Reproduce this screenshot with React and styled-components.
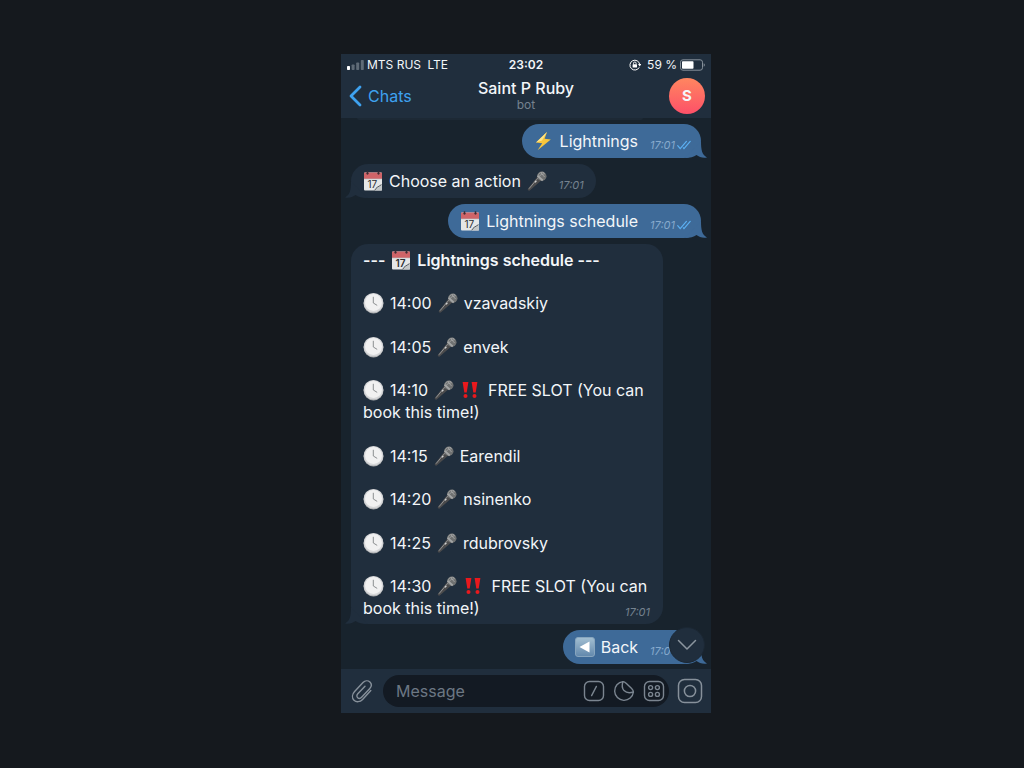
import React from 'react';
import styled, { createGlobalStyle } from 'styled-components';

const GlobalStyle = createGlobalStyle`
  * {
    box-sizing: border-box;
  }

  body {
    margin: 0;
    background-color: #15191e;
    font-family: Inter, 'Liberation Sans', sans-serif;
    color: #f3f6f9;
  }
`;

const Page = styled.main`
  display: flex;
  justify-content: center;
  align-items: center;
  min-height: 100vh;
  padding: 0 0 2px 28px;
`;

const Phone = styled.section`
  width: 100%;
  max-width: 370px;
  background-color: #18232d;
`;

const Header = styled.header`
  height: 64px;
  padding: 0 6px;
  background-color: #202e3d;
`;

const StatusBar = styled.div`
  display: grid;
  grid-template-columns: 1fr auto 1fr;
  align-items: center;
  height: 22px;
  font-size: 12px;
  line-height: 22px;
`;

const StatusGroup = styled.div`
  display: flex;
  align-items: center;
  justify-content: ${(props) => (props.$end ? 'flex-end' : 'flex-start')};
  gap: 3px;
  white-space: pre;
`;

const Clock = styled.span`
  font-weight: 600;
`;

const NavBar = styled.div`
  display: grid;
  grid-template-columns: 1fr auto 1fr;
  align-items: center;
  height: 40px;
`;

const BackLink = styled.a`
  display: flex;
  align-items: center;
  gap: 6px;
  padding-left: 2px;
  font-size: 16px;
  color: #3ea2f0;
  text-decoration: none;
`;

const TitleBlock = styled.div`
  padding-bottom: 2px;
  text-align: center;
`;

const Title = styled.h1`
  margin: 0;
  font-size: 16px;
  font-weight: 500;
  line-height: 20px;
`;

const Subtitle = styled.p`
  margin: 0;
  font-size: 12px;
  line-height: 14px;
  color: #75828f;
`;

const Avatar = styled.div`
  display: flex;
  align-items: center;
  justify-content: center;
  justify-self: end;
  width: 36px;
  height: 36px;
  border-radius: 50%;
  background: linear-gradient(#ff8660, #fd5068);
  font-size: 15px;
  font-weight: 700;
`;

const Chat = styled.div`
  position: relative;
  display: flex;
  flex-direction: column;
  align-items: flex-start;
  gap: 6px;
  padding: 6px 10px 5px;

  &::before {
    content: '';
    position: absolute;
    top: 0;
    left: 16px;
    width: 286px;
    height: 2px;
    border-radius: 0 0 8px 8px;
    background-color: #1d2935;
  }
`;

const Bubble = styled.article`
  position: relative;
  display: flex;
  align-self: ${(props) => (props.$out ? 'flex-end' : 'flex-start')};
  gap: 12px;
  padding: ${(props) => (props.$out ? '6px 10px 6px 12px' : '6px 12px')};
  border-radius: 17px;
  background-color: ${(props) => (props.$out ? '#3e6a98' : '#202e3d')};
  font-size: 16px;
  line-height: 22px;
`;

const TailSvg = styled.svg`
  position: absolute;
  bottom: 0;
  ${(props) => (props.$out ? 'right: -6px;' : 'left: -6px; transform: scaleX(-1);')}
`;

const Line = styled.p`
  display: flex;
  align-items: center;
  gap: 6px;
  margin: 0;
  white-space: nowrap;
`;

const Time = styled.time`
  display: flex;
  align-items: center;
  align-self: flex-end;
  gap: 2px;
  height: 14px;
  font-size: 11px;
  font-style: italic;
  line-height: 14px;
  color: ${(props) => (props.$out ? '#86a9cc' : '#75828f')};
`;

const ScheduleBubble = styled(Bubble)`
  width: 312px;
  max-width: 100%;
  padding: 5px 12px 4px;
`;

const Schedule = styled.div`
  display: flex;
  flex-direction: column;
  justify-content: space-between;
  flex: 1;
  min-height: 371px;
`;

const ScheduleTitle = styled.h2`
  display: flex;
  align-items: center;
  gap: 6px;
  margin: 0;
  font-size: 16px;
  font-weight: 600;
  line-height: 22px;
`;

const CornerTime = styled(Time)`
  position: absolute;
  right: 13px;
  bottom: 5px;
`;

const ScrollButton = styled.button`
  position: absolute;
  right: 6px;
  bottom: 6px;
  display: flex;
  align-items: center;
  justify-content: center;
  width: 36px;
  height: 36px;
  padding: 0;
  border: 1px solid #1b2733;
  border-radius: 50%;
  background-color: #202e3d;
`;

const Footer = styled.form`
  display: flex;
  align-items: center;
  gap: 8px;
  height: 44px;
  padding: 0 8px 0 10px;
  background-color: #202e3d;
`;

const IconButton = styled.button`
  display: flex;
  flex: none;
  padding: 0;
  border: none;
  background: none;
  cursor: pointer;
`;

const Field = styled.div`
  display: flex;
  align-items: center;
  flex: 1;
  gap: 8px;
  min-width: 0;
  height: 32px;
  padding: 0 4px 0 13px;
  border-radius: 16px;
  background-color: #131a23;
`;

const MessageInput = styled.input`
  flex: 1;
  min-width: 0;
  padding: 0;
  border: none;
  outline: none;
  background: none;
  font-family: inherit;
  font-size: 16px;
  color: #f3f6f9;

  &::placeholder {
    color: #6c7783;
    opacity: 1;
  }
`;

const Emoji = styled.svg`
  flex: none;
  display: block;
`;

const Tail = ({ out }) => (
  <TailSvg $out={out} width="22" height="17" viewBox="0 0 22 17" aria-hidden="true">
    <path d="M16 0 C16 9 17 14 22 16.4 C18 17.2 14 16 11.5 14 C9 16 5 17 0 17 Z" fill={out ? '#3e6a98' : '#202e3d'} />
  </TailSvg>
);

const Checks = () => (
  <svg width="14" height="10" viewBox="0 0 14 10" fill="none" stroke="#5cb0f2" strokeWidth="1.2" strokeLinecap="round">
    <path d="M0.7 5.6 L3.2 8.6 L9.4 1.4 M6.4 7.8 L7 8.6 L13.2 1.4" />
  </svg>
);

const Calendar = () => (
  <Emoji width="20" height="20" viewBox="0 0 20 20" role="img" aria-label="calendar">
    <rect x="1" y="1.5" width="18" height="18" rx="1" fill="#e6e7e7" />
    <path d="M1 2.5 a1 1 0 0 1 1-1 h16 a1 1 0 0 1 1 1 V8 h-18 Z" fill="#cf6468" />
    <path d="M1 8 h18" stroke="#b9c0c4" strokeWidth="0.6" />
    <path d="M4.5 0.3 v2.6 M15.5 0.3 v2.6" stroke="#3e2c33" strokeWidth="1.4" />
    <circle cx="4.5" cy="2.6" r="1.1" fill="#3e2c33" />
    <circle cx="15.5" cy="2.6" r="1.1" fill="#3e2c33" />
    <text x="4.5" y="17" fontSize="10" fontFamily="Inter, sans-serif" fill="#2b2e31">17</text>
    <path d="M12 19.5 C12.5 16.5 15.5 14.5 19 14 V19.5 Z" fill="#c4c8ca" />
    <path d="M11.8 19.2 C13 16.5 15.5 15.6 18.5 13.6" stroke="#53585c" strokeWidth="1" fill="none" />
  </Emoji>
);

const Mic = () => (
  <Emoji width="20" height="20" viewBox="0 0 20 20" role="img" aria-label="microphone">
    <path d="M10.3 5.8 L14.2 9.6 L3 19.2 a1.2 1.2 0 0 1 -1.8 -1.8 Z" fill="#4b4b4c" />
    <path d="M11 7 L2 17.7" stroke="#929394" strokeWidth="1" />
    <circle cx="14.8" cy="5.3" r="4.7" fill="#6f7171" />
    <path d="M11.2 3.8 a4.4 4.4 0 0 1 6 -2 M11.6 5.8 a8 8 0 0 1 6.3 -3.2 M14 2 l3.6 4" stroke="#a9abab" strokeWidth="0.8" fill="none" />
    <path d="M10.5 4.6 L15.7 9.5" stroke="#a4a6a6" strokeWidth="1.8" />
    <path d="M8 11.4 l1.3 -1.5" stroke="#d6d7d7" strokeWidth="1.4" />
  </Emoji>
);

const ClockFace = () => (
  <Emoji width="21" height="22" viewBox="0 0 21 22" role="img" aria-label="clock">
    <circle cx="10.5" cy="11.4" r="10" fill="#a9abad" />
    <circle cx="10.5" cy="10.8" r="9.8" fill="#d5d6d8" />
    <circle cx="10.5" cy="10.6" r="8.5" fill="#f1f1f1" />
    <path d="M10.3 4.8 V11 L14.2 13.4" stroke="#8d9092" strokeWidth="1" fill="none" />
  </Emoji>
);

const Bangs = () => (
  <Emoji width="22" height="20" viewBox="0 0 22 20" role="img" aria-label="attention">
    <g fill="#e9191d">
      <path d="M2.6 2 h5.8 L6.7 12.6 H4.3 Z" />
      <path d="M11.6 2 h5.8 L15.7 12.6 h-2.4 Z" />
      <circle cx="5.5" cy="16" r="2" />
      <circle cx="14.5" cy="16" r="2" />
    </g>
  </Emoji>
);

const Bolt = () => (
  <Emoji width="20" height="20" viewBox="0 0 20 20" role="img" aria-label="lightning">
    <path d="M13 1 L2 11.4 L8.2 12.2 L3.6 19.2 L16.8 8.6 L10.6 7.8 Z" fill="#f8c63c" />
    <path d="M13 1 L2 11.4 L8 9.6 Z" fill="#ffe58a" />
  </Emoji>
);

const BackKey = () => (
  <Emoji width="20" height="20" viewBox="0 0 20 20" role="img" aria-label="back">
    <defs>
      <linearGradient id="key" x1="0" y1="0" x2="0" y2="1">
        <stop offset="0" stopColor="#a3bfd2" />
        <stop offset="1" stopColor="#6288ac" />
      </linearGradient>
    </defs>
    <rect x="0.5" y="0.5" width="19" height="19" rx="2.5" fill="url(#key)" stroke="#87a5be" />
    <path d="M14.5 4.5 V15.5 L4.5 10 Z" fill="#fff" />
  </Emoji>
);

const slots = [
  { time: '14:00', speaker: 'vzavadskiy' },
  { time: '14:05', speaker: 'envek' },
  { time: '14:10', speaker: null },
  { time: '14:15', speaker: 'Earendil' },
  { time: '14:20', speaker: 'nsinenko' },
  { time: '14:25', speaker: 'rdubrovsky' },
  { time: '14:30', speaker: null },
];

const Slot = ({ time, speaker }) => (
  <div>
    <Line>
      <ClockFace />
      <span>{time}</span>
      <Mic />
      {speaker ? (
        <span>{speaker}</span>
      ) : (
        <>
          <Bangs />
          <span>FREE SLOT (You can</span>
        </>
      )}
    </Line>
    {!speaker && <Line>book this time!)</Line>}
  </div>
);

const OutMessage = ({ icon, text }) => (
  <Bubble $out>
    <Tail out />
    <Line>
      {icon}
      <span>{text}</span>
    </Line>
    <Time $out>
      17:01
      <Checks />
    </Time>
  </Bubble>
);

const StatusRow = () => (
  <StatusBar>
    <StatusGroup>
      <svg width="17" height="10" viewBox="0 0 17 10" fill="#5f6b77">
        <rect x="0" y="6" width="3" height="4" rx="0.8" fill="#fff" />
        <rect x="4.6" y="4.5" width="3" height="5.5" rx="0.8" />
        <rect x="9.2" y="2.5" width="3" height="7.5" rx="0.8" />
        <rect x="13.8" y="0" width="3" height="10" rx="0.8" />
      </svg>
      <span>MTS RUS</span>
      <span> LTE</span>
    </StatusGroup>
    <Clock>23:02</Clock>
    <StatusGroup $end>
      <svg width="12" height="12" viewBox="0 0 12 12" fill="none" stroke="#fff">
        <path d="M10.2 8.4 A4.9 4.9 0 1 1 10.7 5.4" />
        <path d="M9 5 h3.4 L10.7 7.4 Z" fill="#fff" stroke="none" />
        <rect x="3.6" y="5.3" width="4.4" height="3.2" rx="0.5" fill="#fff" stroke="none" />
        <path d="M4.5 5.4 V4.3 a1.3 1.3 0 0 1 2.6 0 V5.4" strokeWidth="0.9" />
      </svg>
      <span> 59 %</span>
      <svg width="25" height="12" viewBox="0 0 25 12" fill="none">
        <rect x="0.5" y="0.8" width="22" height="10.4" rx="2.4" stroke="#86909a" />
        <rect x="2" y="2.3" width="11.5" height="7.4" rx="0.8" fill="#fff" />
        <path d="M23.7 4.2 a2 2 0 0 1 0 3.6 Z" fill="#86909a" />
      </svg>
    </StatusGroup>
  </StatusBar>
);

const App = () => (
  <>
    <GlobalStyle />
    <Page>
      <Phone>
        <Header>
          <StatusRow />
          <NavBar>
            <BackLink href="#chats">
              <svg width="13" height="22" viewBox="0 0 13 22" fill="none" stroke="#3ea2f0" strokeWidth="2.8" strokeLinecap="round" strokeLinejoin="round">
                <path d="M11 2 L2 11 L11 20" />
              </svg>
              Chats
            </BackLink>
            <TitleBlock>
              <Title>Saint P Ruby</Title>
              <Subtitle>bot</Subtitle>
            </TitleBlock>
            <Avatar>S</Avatar>
          </NavBar>
        </Header>

        <Chat>
          <OutMessage icon={<Bolt />} text="Lightnings" />
          <Bubble>
            <Tail />
            <Line>
              <Calendar />
              <span>Choose an action</span>
              <Mic />
            </Line>
            <Time>17:01</Time>
          </Bubble>
          <OutMessage icon={<Calendar />} text="Lightnings schedule" />
          <ScheduleBubble>
            <Tail />
            <Schedule>
              <ScheduleTitle>
                <span>---</span>
                <Calendar />
                <span>Lightnings schedule ---</span>
              </ScheduleTitle>
              {slots.map((slot) => (
                <Slot key={slot.time} {...slot} />
              ))}
            </Schedule>
            <CornerTime>17:01</CornerTime>
          </ScheduleBubble>
          <OutMessage icon={<BackKey />} text="Back" />
          <ScrollButton type="button" aria-label="Scroll to bottom">
            <svg width="20" height="12" viewBox="0 0 20 12" fill="none" stroke="#8b959f" strokeWidth="1.5" strokeLinecap="round" strokeLinejoin="round">
              <path d="M1.5 1.5 L10 10 L18.5 1.5" />
            </svg>
          </ScrollButton>
        </Chat>

        <Footer>
          <IconButton type="button" aria-label="Attach">
            <svg width="24" height="26" viewBox="0 0 24 26" fill="none" stroke="#87919b" strokeWidth="1.4" strokeLinecap="round" strokeLinejoin="round">
              <path d="M19.8 12.6 L11.6 21.4 C9 24.2 5.2 24.4 3 22.2 C0.8 20 1 16.4 3.6 13.6 L12 4.6 C14 2.5 17 2.3 18.9 4.1 C20.8 5.9 20.6 8.6 18.6 10.8 L10.6 19.3 C9.4 20.6 7.8 20.7 6.7 19.7 C5.6 18.7 5.6 17.1 6.8 15.8 L14 8.2" />
            </svg>
          </IconButton>
          <Field>
            <MessageInput type="text" placeholder="Message" aria-label="Message" />
            <IconButton type="button" aria-label="Commands">
              <svg width="22" height="22" viewBox="0 0 22 22" fill="none" stroke="#7b8590" strokeWidth="1.4" strokeLinecap="round">
                <rect x="1.5" y="1.5" width="19" height="19" rx="5" />
                <path d="M13.4 6.4 L8.6 15.6" />
              </svg>
            </IconButton>
            <IconButton type="button" aria-label="Stickers">
              <svg width="22" height="22" viewBox="0 0 22 22" fill="none" stroke="#7b8590" strokeWidth="1.4" strokeLinecap="round" strokeLinejoin="round">
                <path d="M10 1.6 A9.4 9.4 0 1 0 20.4 12 C20.4 10.6 19.8 9.6 18.6 8.4 L13.4 3.4 C12.4 2.4 11.4 1.6 10 1.6 Z" />
                <path d="M10 1.6 C8.8 5 9 8.4 11 10.6 C13.2 12.8 17 13.2 20.4 12" />
              </svg>
            </IconButton>
            <IconButton type="button" aria-label="Bot keyboard">
              <svg width="22" height="22" viewBox="0 0 22 22" fill="none" stroke="#7b8590" strokeWidth="1.4">
                <rect x="1.5" y="1.5" width="19" height="19" rx="5" />
                <circle cx="7.6" cy="7.6" r="2" />
                <circle cx="14.4" cy="7.6" r="2" />
                <circle cx="7.6" cy="14.4" r="2" />
                <circle cx="14.4" cy="14.4" r="2" />
              </svg>
            </IconButton>
          </Field>
          <IconButton type="button" aria-label="Camera">
            <svg width="26" height="26" viewBox="0 0 26 26" fill="none" stroke="#87919b" strokeWidth="1.5">
              <rect x="1.5" y="1.5" width="23" height="23" rx="6" />
              <circle cx="13" cy="13" r="5.6" />
            </svg>
          </IconButton>
        </Footer>
      </Phone>
    </Page>
  </>
);

export default App;
